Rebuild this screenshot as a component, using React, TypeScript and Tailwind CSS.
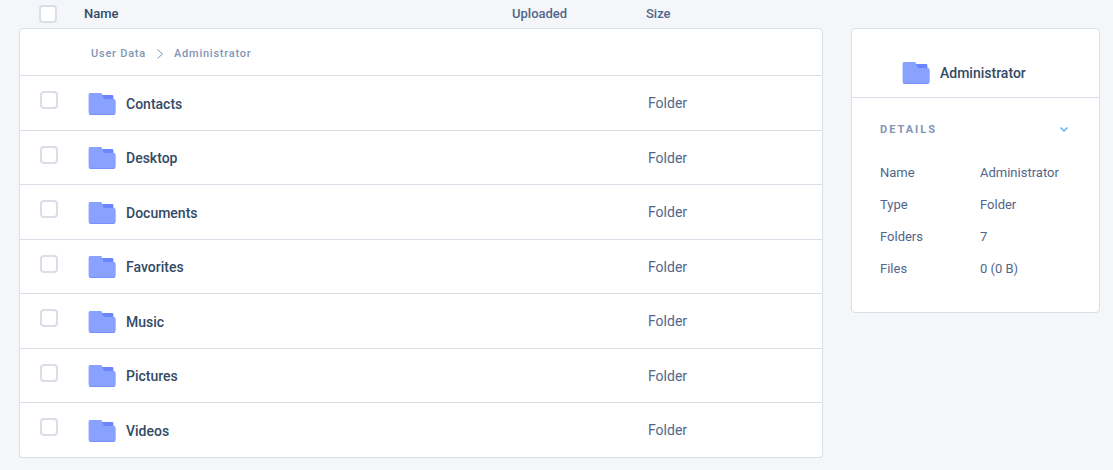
import { useState } from "react";

const folders = [
  "Contacts",
  "Desktop",
  "Documents",
  "Favorites",
  "Music",
  "Pictures",
  "Videos",
];

const details = [
  { label: "Name", value: "Administrator" },
  { label: "Type", value: "Folder" },
  { label: "Folders", value: "7" },
  { label: "Files", value: "0 (0 B)" },
];

const FolderIcon = () => (
  <svg width="28" height="22" viewBox="0 0 28 22" className="shrink-0" aria-hidden="true">
    <path d="M12 2h12a1.4 1.4 0 0 1 1.4 1.4V9H12z" fill="#6b85ff" />
    <path
      d="M2.4 0h10a1.4 1.4 0 0 1 1.3.9l1.3 3.7a2 2 0 0 0 1.8 1.4h8.7a1.9 1.9 0 0 1 1.9 1.9V20.3a1.7 1.7 0 0 1-1.7 1.7H2.5a1.7 1.7 0 0 1-1.7-1.7V1.6A1.6 1.6 0 0 1 2.4 0z"
      fill="#788ffc"
    />
    <path
      d="M2.4 0h10a1.4 1.4 0 0 1 1.3.9l1.3 3.7a2 2 0 0 0 1.8 1.4h8.7a1.9 1.9 0 0 1 1.9 1.9V19.3a1.7 1.7 0 0 1-1.7 1.7H2.5a1.7 1.7 0 0 1-1.7-1.7V1.6A1.6 1.6 0 0 1 2.4 0z"
      fill="#8aa2ff"
    />
  </svg>
);

type CheckProps = {
  label: string;
  checked: boolean;
  onChange: () => void;
};

const Check = ({ label, checked, onChange }: CheckProps) => (
  <input
    type="checkbox"
    aria-label={label}
    checked={checked}
    onChange={onChange}
    className="block size-[18px] cursor-pointer appearance-none rounded-[4px] border-2 border-[#d9dee9] bg-white checked:border-[#8aa2ff] checked:bg-[#8aa2ff]"
  />
);

const FileTable = () => {
  const [selected, setSelected] = useState<string[]>([]);
  const allSelected = selected.length === folders.length;

  const toggle = (name: string) =>
    setSelected((prev) =>
      prev.includes(name) ? prev.filter((n) => n !== name) : [...prev, name],
    );

  return (
    <table className="w-full table-fixed border-separate border-spacing-0 text-left">
      <colgroup>
        <col className="w-[65px]" />
        <col />
        <col className="w-[134px]" />
        <col className="w-[177px]" />
      </colgroup>
      <thead>
        <tr className="h-7 text-[13px] leading-5 text-[#51668a]">
          <th className="p-0 pl-5">
            <Check
              label="Select all"
              checked={allSelected}
              onChange={() => setSelected(allSelected ? [] : folders)}
            />
          </th>
          <th className="p-0 font-medium text-[#334a66]">Name</th>
          <th className="p-0 font-medium">Uploaded</th>
          <th className="p-0 font-medium">Size</th>
        </tr>
      </thead>
      <tbody>
        <tr className="h-12">
          <td
            colSpan={4}
            className="rounded-t-[4px] border border-[#d9dee9] bg-white p-0 pt-[3px] pl-[71px]"
          >
            <nav
              aria-label="Breadcrumb"
              className="flex items-center text-[11px] leading-4 font-medium tracking-[0.07em] text-[#7f95b5]"
            >
              <a href="#user-data">User Data</a>
              <svg
                width="8"
                height="10"
                viewBox="0 0 8 10"
                fill="none"
                stroke="currentColor"
                className="mx-[10px]"
                aria-hidden="true"
              >
                <path d="M1.5 0.5L6.5 5L1.5 9.5" />
              </svg>
              <a href="#administrator">Administrator</a>
            </nav>
          </td>
        </tr>
      </tbody>
      <tbody>
        {folders.map((name) => (
          <tr key={name} className="group/row h-[55px] even:h-[54px]">
            <td className="border-b border-l border-[#d9dee9] bg-white p-0 pb-[6px] pl-5 group-last/row:rounded-bl-[4px]">
              <Check
                label={name}
                checked={selected.includes(name)}
                onChange={() => toggle(name)}
              />
            </td>
            <td className="border-b border-[#d9dee9] bg-white p-0 pt-px pl-1">
              <div className="flex items-center gap-[10px] text-sm font-medium text-[#334a66]">
                <FolderIcon />
                <a href="#folder">{name}</a>
              </div>
            </td>
            <td className="border-b border-[#d9dee9] bg-white p-0"></td>
            <td className="border-r border-b border-[#d9dee9] bg-white p-0 pl-[2px] text-sm text-[#51668a] group-last/row:rounded-br-[4px]">
              Folder
            </td>
          </tr>
        ))}
      </tbody>
    </table>
  );
};

const DetailsPanel = () => {
  const [open, setOpen] = useState(true);

  return (
    <aside className="mt-7 w-[249px] shrink-0 rounded-[4px] border border-[#d9dee9] bg-white">
      <div className="flex items-center gap-[10px] border-b border-[#d9dee9] pt-[33px] pb-[13px] pl-[50px]">
        <FolderIcon />
        <h2 className="text-sm leading-[22px] font-medium text-[#334a66]">Administrator</h2>
      </div>
      <div className="px-7 pt-6 pb-[27px]">
        <button
          type="button"
          aria-expanded={open}
          onClick={() => setOpen(!open)}
          className="flex w-full cursor-pointer items-center justify-between text-[11px] leading-4 font-bold tracking-[2px] text-[#7f95b5]"
        >
          DETAILS
          <svg
            width="8"
            height="6"
            viewBox="0 0 8 6"
            fill="none"
            stroke="#57b0fb"
            strokeWidth="1.4"
            className="mr-[3px]"
            aria-hidden="true"
          >
            <path d="M0.6 0.6L4 4L7.4 0.6" />
          </svg>
        </button>
        {open && (
          <dl className="mt-[19px] text-[13px] leading-8 text-[#51668a]">
            {details.map((item) => (
              <div key={item.label} className="flex">
                <dt className="w-[100px]">{item.label}</dt>
                <dd>{item.value}</dd>
              </div>
            ))}
          </dl>
        )}
      </div>
    </aside>
  );
};

const App = () => {
  return (
    <main className="flex min-h-screen items-start gap-7 bg-[#f4f6fa] pr-[13px] pl-[19px] font-['Roboto',sans-serif]">
      <div className="min-w-0 flex-1">
        <FileTable />
      </div>
      <DetailsPanel />
    </main>
  );
};

export default App;
